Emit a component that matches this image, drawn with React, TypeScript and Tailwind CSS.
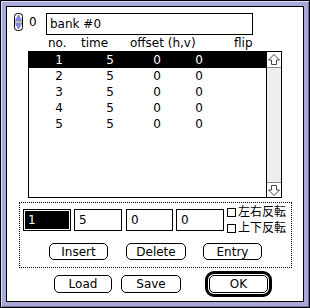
import React from "react"

const rows = [1, 2, 3, 4, 5].map((n) => ({ no: n, time: 5, h: 0, v: 0 }))

function Stepper() {
  return (
    <svg width="9" height="18" viewBox="0 0 9 18" className="block">
      <rect x="0.5" y="0.5" width="8" height="17" rx="3" fill="#f4f4f4" stroke="black" />
      <path d="M4.5 2 L7.5 7.5 H1.5 Z" fill="#8a8af0" stroke="#5050b0" strokeWidth="0.5" />
      <line x1="1" y1="9" x2="8" y2="9" stroke="#888" />
      <path d="M4.5 16 L7.5 10.5 H1.5 Z" fill="#8a8af0" stroke="#5050b0" strokeWidth="0.5" />
    </svg>
  )
}

function ScrollArrow({ down = false }: { down?: boolean }) {
  return (
    <svg width="14" height="15" viewBox="0 0 14 15" className="block">
      <path
        d={down ? "M7 12.5 L1.5 7 H4.5 V2.5 H9.5 V7 H12.5 Z" : "M7 2.5 L1.5 8 H4.5 V12.5 H9.5 V8 H12.5 Z"}
        fill="white"
        stroke="#444"
      />
    </svg>
  )
}

function Field({ value, w }: { value: string; w: string }) {
  return (
    <div className={`${w} h-[22px] border border-black bg-white pl-[4px] leading-[20px]`}>{value}</div>
  )
}

function Btn({ label, w }: { label: string; w: string }) {
  return (
    <div className={`${w} h-[17px] border border-black rounded-[5px] bg-white flex items-center justify-center leading-none`}>
      {label}
    </div>
  )
}

function Check({ label }: { label: string }) {
  return (
    <div className="h-[16px] flex items-center">
      <div className="w-[9px] h-[9px] border border-black bg-white" />
      <span className="ml-[2px] leading-none">{label}</span>
    </div>
  )
}

export default function App() {
  return (
    <div className="w-[310px] h-[308px] border border-black bg-[#a9a9d9] p-[5px] shadow-[inset_1px_1px_0_#dcdcff,inset_-1px_-1px_0_#7070a0] text-[12px] text-black [font-family:'DejaVu_Sans','Noto_Sans_CJK_JP',sans-serif]">
      <div className="w-full h-full border border-black bg-white">
        {/* bank selector */}
        <div className="flex items-start mt-[6px] ml-[7px]">
          <Stepper />
          <span className="ml-[6px] w-[17px] leading-[18px]">0</span>
          <div className="w-[207px] h-[22px] border border-black pl-[3px] leading-[20px]">bank #0</div>
        </div>

        {/* column headers */}
        <div className="flex h-[16px] leading-[16px] ml-[41px]">
          <span className="w-[33px]">no.</span>
          <span className="w-[49px]">time</span>
          <span className="w-[104px]">offset (h,v)</span>
          <span>flip</span>
        </div>

        {/* list */}
        <div className="ml-[21px] w-[254px] h-[147px] border border-black flex">
          <div className="flex-1">
            {rows.map((r) => (
              <div
                key={r.no}
                className={`flex h-[16px] leading-[16px] ${r.no === 1 ? "bg-black text-white" : ""}`}
              >
                <span className="w-[34px] text-right">{r.no}</span>
                <span className="w-[51px] text-right">{r.time}</span>
                <span className="w-[47px] text-right">{r.h}</span>
                <span className="w-[42px] text-right">{r.v}</span>
              </div>
            ))}
          </div>
          <div className="w-[15px] border-l border-black bg-[#eeeeee] flex flex-col justify-between">
            <div className="h-[16px] bg-white border-b border-[#888]">
              <ScrollArrow />
            </div>
            <div className="h-[15px] bg-white border-t border-[#888]">
              <ScrollArrow down />
            </div>
          </div>
        </div>

        {/* edit group */}
        <div className="mt-[4px] ml-[12px] w-[273px] h-[66px] border border-dotted border-black px-[3px]">
          <div className="flex items-center h-[22px] mt-[6px]">
            <div className="w-[48px] h-[22px] border border-black p-[1px] bg-white">
              <div className="w-full h-full bg-black text-white pl-[3px] leading-[18px]">1</div>
            </div>
            <div className="ml-[3px]">
              <Field value="5" w="w-[48px]" />
            </div>
            <div className="ml-[4px]">
              <Field value="0" w="w-[47px]" />
            </div>
            <div className="ml-[3px]">
              <Field value="0" w="w-[48px]" />
            </div>
            <div className="ml-[3px] flex flex-col">
              <Check label="左右反転" />
              <Check label="上下反転" />
            </div>
          </div>
          <div className="flex mt-[12px] ml-[26px]">
            <Btn label="Insert" w="w-[59px]" />
            <div className="ml-[18px]">
              <Btn label="Delete" w="w-[60px]" />
            </div>
            <div className="ml-[17px]">
              <Btn label="Entry" w="w-[59px]" />
            </div>
          </div>
        </div>

        {/* bottom buttons */}
        <div className="flex items-center mt-[3px] ml-[47px]">
          <div className="w-[58px] h-[18px] border border-black rounded-[5px] flex items-center justify-center leading-none">Load</div>
          <div className="ml-[9px] w-[60px] h-[18px] border border-black rounded-[5px] flex items-center justify-center leading-none">Save</div>
          <div className="ml-[24px] border-[3px] border-black rounded-[9px] p-[1px] bg-white">
            <div className="w-[59px] h-[18px] border border-black rounded-[5px] flex items-center justify-center leading-none">OK</div>
          </div>
        </div>
      </div>
    </div>
  )
}
